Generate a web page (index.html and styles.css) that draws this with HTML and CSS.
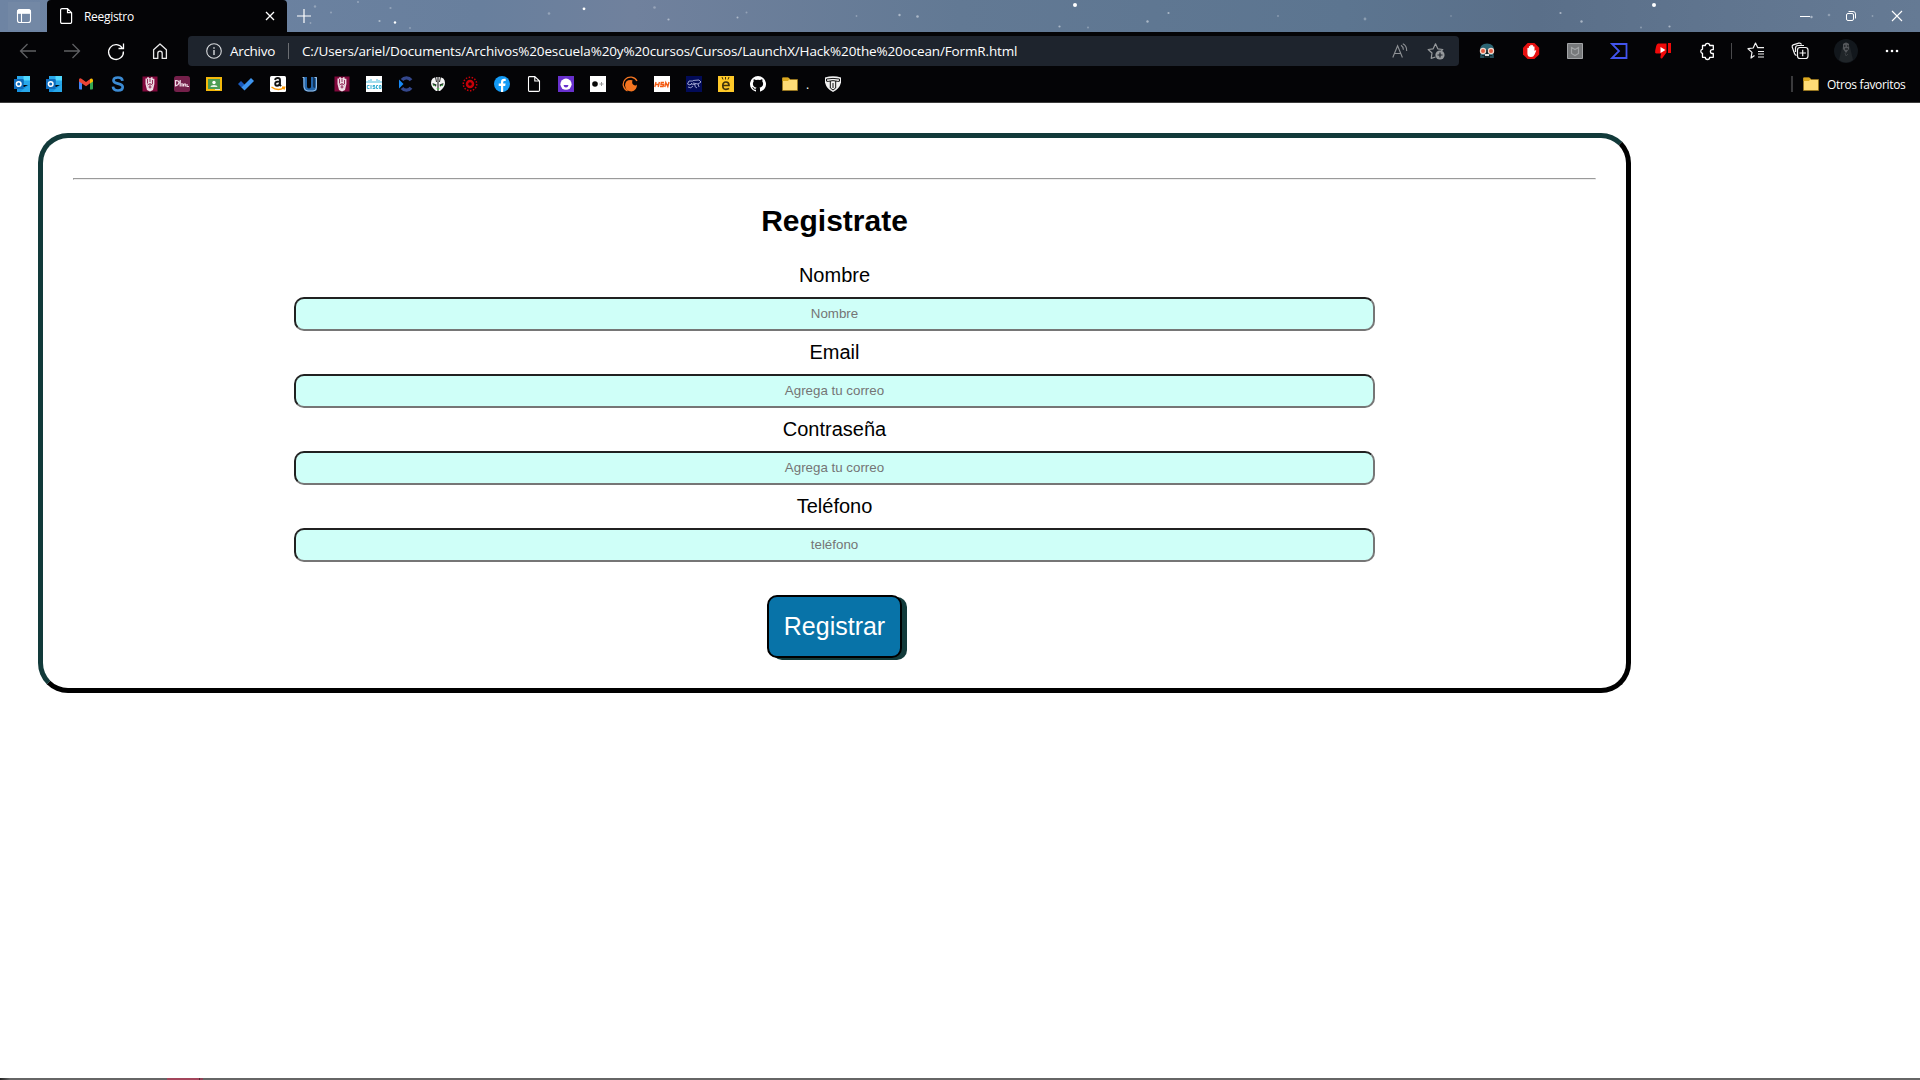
FILE: index.html
```html
<!DOCTYPE html>
<html lang="es">
<head>
<meta charset="utf-8">
<title>Reegistro</title>
<link rel="stylesheet" href="styles.css">
</head>
<body>
<div class="window">
<header class="chrome">
  <div class="tabstrip">
    <svg class="stars" width="1920" height="32" viewBox="0 0 1920 32" fill="#d3dae3">
      <g opacity=".4"><circle cx="315" cy="6.500" r="1.200"/><circle cx="331" cy="12.500" r="1"/><circle cx="358" cy="2" r="1.100"/><circle cx="390.500" cy="8" r="1.100"/><circle cx="410" cy="28" r=".9"/><circle cx="310.500" cy="23" r=".9"/><circle cx="549" cy="13.500" r="1.300"/><circle cx="654.500" cy="7.500" r="1.300"/><circle cx="746.500" cy="12.500" r="1"/><circle cx="856.500" cy="16" r=".9"/><circle cx="1088" cy="27.500" r="1"/><circle cx="1278" cy="16" r=".9"/><circle cx="1365" cy="19" r="1.400"/><circle cx="1451" cy="16" r=".8"/><circle cx="1641" cy="27.500" r="1"/><circle cx="1829" cy="15" r="1.300"/><circle cx="1872.500" cy="16" r=".9"/></g>
      <g opacity=".65"><circle cx="379.500" cy="21" r="1.100"/><circle cx="668.500" cy="19.500" r="1.100"/><circle cx="737.500" cy="17.500" r="1"/><circle cx="899.500" cy="15" r="1.200"/><circle cx="917.500" cy="16.500" r="1.300"/><circle cx="1059.500" cy="26.500" r="1.100"/><circle cx="1147.500" cy="21.500" r="1.200"/><circle cx="1168.500" cy="13" r="1.100"/><circle cx="1560.500" cy="13" r="1.100"/><circle cx="1581.500" cy="21.500" r="1.200"/><circle cx="1669.500" cy="26.500" r="1.100"/><circle cx="1811.500" cy="17" r="1.200"/></g>
      <g fill="#fff"><circle cx="395" cy="22.500" r="1.200"/><circle cx="584" cy="8.800" r="1.400"/><circle cx="1075" cy="5" r="2"/><circle cx="1654" cy="5" r="2"/></g>
    </svg>
    <div class="tab-menu"><svg width="16" height="16" viewBox="0 0 16 16" fill="none" stroke="#fff" stroke-width="1.100"><rect x="1.500" y="1.800" width="13" height="12.700" rx="2.300"/><path d="M1.500 3.500a2 2 0 0 1 2-2h9a2 2 0 0 1 2 2v1.800h-13z" fill="#fff"/><path d="M5.500 5v9.500"/></svg></div>
    <div class="tab">
      <svg width="14" height="18" viewBox="0 0 14 18" fill="none" stroke="#fff" stroke-width="1.200"><path d="M3 1.600h5.500L12.600 5.700V15a1.400 1.400 0 0 1-1.400 1.400H3A1.400 1.400 0 0 1 1.600 15V3A1.400 1.400 0 0 1 3 1.600zM8.500 1.600v4.100h4.100"/></svg>
      <span class="tab-title">Reegistro</span>
      <svg class="tab-close" width="10" height="10" viewBox="0 0 10 10" stroke="#fff" stroke-width="1.300"><path d="M1 1l8 8M9 1l-8 8"/></svg>
    </div>
    <svg class="new-tab" width="16" height="16" viewBox="0 0 16 16" stroke="#fff" stroke-width="1.200"><path d="M8 1v14M1 8h14"/></svg>
    <div class="win-controls">
      <svg width="46" height="32" viewBox="0 0 46 32" fill="none" stroke="#fff"><path d="M18 16.500h10"/></svg>
      <svg width="46" height="32" viewBox="0 0 46 32" fill="none" stroke="#fff"><rect x="18.500" y="13.500" width="7" height="7" rx="1.500"/><path d="M20.500 11.500h4.500a2.500 2.500 0 0 1 2.500 2.500v4.500"/></svg>
      <svg width="46" height="32" viewBox="0 0 46 32" fill="none" stroke="#fff" stroke-width="1.100"><path d="M18 11l10 10M28 11l-10 10"/></svg>
    </div>
  </div>

  <div class="toolbar">
    <div class="nav">
      <svg class="cell" viewBox="0 0 44 38" fill="none" stroke="#5f6063" stroke-width="1.300"><path d="M36 19H20.500M27.500 12l-7 7 7 7"/></svg>
      <svg class="cell" viewBox="0 0 44 38" fill="none" stroke="#5f6063" stroke-width="1.300"><path d="M20 19h15.500M28.500 12l7 7-7 7"/></svg>
      <svg class="cell" viewBox="0 0 44 38" fill="none" stroke="#fff" stroke-width="1.300"><path d="M34.500 16.500a7.400 7.400 0 1 0 .9 3M35.500 11.500v5h-5"/></svg>
      <svg class="cell" viewBox="0 0 44 38" fill="none" stroke="#e9e9e9" stroke-width="1.300"><path d="M21.600 17.700L28 12l6.400 5.700v8.700h-4.200v-5a2.200 2.200 0 0 0-4.400 0v5h-4.200z" stroke-linejoin="round"/></svg>
    </div>
    <div class="address">
      <svg width="16" height="16" viewBox="0 0 16 16" fill="none" stroke="#d8dadd" stroke-width="1.100"><circle cx="8" cy="8" r="7.300"/><path d="M8 7v5M8 4.200v1.500" stroke-width="1.400"/></svg>
      <span class="scheme">Archivo</span>
      <span class="rule"></span>
      <span class="url">C:/Users/ariel/Documents/Archivos%20escuela%20y%20cursos/Cursos/LaunchX/Hack%20the%20ocean/FormR.html</span>
      <svg class="reader" width="16" height="16" viewBox="0 0 16 16" fill="none" stroke="#8e9195" stroke-width="1.100"><path d="M.8 14.500L5.600 2.800l4.800 11.700M2.400 10.500h6.400M9 2.200c1.500.9 2.400 2.600 2.400 4.600M10.800.8c2.600 1.200 4 3.800 3.900 7.200"/></svg>
      <svg width="18" height="18" viewBox="0 0 18 18" fill="none" stroke="#96999c" stroke-width="1.200"><path d="M8.500 15L4.200 16.400 5 11 1.200 7.500l5-.7L8.500 1.800l2.300 5 5 .7-1.700 1.700" stroke-linejoin="round"/><circle cx="13" cy="13" r="4.600" fill="#96999c" stroke="none"/><path d="M10.500 13h5M13 10.500v5" stroke="#1f242c"/></svg>
    </div>
    <div class="tools">
      <svg class="cell" viewBox="0 0 44 38"><path d="M15 18q0-6.500 7-6.500t7 6.500z" fill="#2c6573"/><path d="M15.500 18h13v8h-13z" fill="#15262b"/><path d="M16 26v-3.500h12V26M18 24v2M26 24v2" stroke="#377789" fill="none"/><path d="M20 22h4v2h-4z" fill="#ddd"/><circle cx="18" cy="19" r="3.200" fill="#f1d8ca"/><circle cx="26" cy="19" r="3.200" fill="#f1d8ca"/><circle cx="18" cy="19" r="2" fill="#df5b40"/><circle cx="26" cy="19" r="2" fill="#df5b40"/></svg>
      <svg class="cell" viewBox="0 0 44 38"><path d="M18.600 11h6.800l4.800 4.700v6.700L25.400 27h-6.800L14 22.400v-6.700z" fill="#e6100f"/><path d="M18.400 16v5.500q0 3.500 3.600 3.500 2.500 0 3.600-2.500l1.700-4q-1-.7-1.800.6V14.700q-.7-.8-1.400 0v-1.200q-.7-.8-1.400 0v-.4q-.7-.8-1.400 0v1.200q-.7-.8-1.400 0V16q-.7-.7-1.500 0z" fill="#fff"/></svg>
      <svg class="cell" viewBox="0 0 44 38"><path d="M14.500 11.500h15v15h-15z" fill="#77797b" stroke="#a2a4a6"/><path d="M18.500 15.500l3.500 2 3.500-2v6l-3.500 2-3.500-2z" fill="none" stroke="#a3a5a7" stroke-width="1.200"/></svg>
      <svg class="cell" viewBox="0 0 44 38"><path d="M15 12h14.500v14H15l7-7z" fill="none" stroke="#4254ed" stroke-width="1.800"/></svg>
      <svg class="cell" viewBox="0 0 44 38" fill="#f00909"><path d="M17 11.500h8.500v9L21 26.500q-2 .5-1.500-2l.6-3H15.500q-2-.5-1.300-3l1-4.500q.4-2 1.800-2.500zM27 11h3v10h-3z"/><path d="M19.500 15l5 3-5 3z" fill="#fff"/></svg>
      <svg class="cell" viewBox="0 0 44 38" fill="none" stroke="#fff" stroke-width="1.300"><path d="M17.500 13.500h2.800a2.200 2.200 0 0 1 4.400 0h3.600v4.200h-1a1.900 1.900 0 0 0 0 3.800h1v3.800h-3.600a2.200 2.200 0 0 1-4.400 0h-2.800v-3.800a2.200 2.200 0 0 1 0-4.300z" stroke-linejoin="round"/></svg>
      <span class="tool-rule"></span>
      <svg class="cell" viewBox="0 0 44 38" fill="none" stroke="#f2f2f2" stroke-width="1.200"><path d="M20.500 23.500L17 26l1-5.600-4-3.700 5.200-.7L21.500 11l2.300 4.700h6.200M24 19.500h6M24 22h6M24 25h6" stroke-linejoin="round"/></svg>
      <svg class="cell" viewBox="0 0 44 38" fill="none" stroke="#f2f2f2" stroke-width="1.200"><rect x="19.500" y="15.500" width="10.500" height="11" rx="2.500"/><path d="M24.700 17.800v6.400M21.500 21h6.400M18.500 23.500q-1.500-.6-2-2L14.200 15q-.3-1.500 1-2.100l5.600-1.800q2-.4 2.700 1.300M17.500 20v-4q.1-2.500 2.500-2.500h6"/></svg>
      <svg class="avatar" width="24" height="24" viewBox="0 0 24 24"><circle cx="12" cy="12" r="12" fill="#12171c"/><path d="M5 21l3-12q4-8 8-1l3 13q-7 5-14 0z" fill="#202529"/><path d="M9 5q3-3 6 0v5l-3 4-3-4z" fill="#53565a"/><path d="M10 7h1.500M13 7h1.500M11 10h3" stroke="#090b0e"/><path d="M11 14l1 3 2-2" stroke="#393d41" fill="none"/></svg>
      <svg class="cell more" viewBox="0 0 44 38" fill="#fff"><circle cx="17" cy="19" r="1.300"/><circle cx="22" cy="19" r="1.300"/><circle cx="27" cy="19" r="1.300"/></svg>
    </div>
  </div>

  <div class="bookmarks">
    <svg class="fav" viewBox="0 0 16 16"><path d="M3 0h13v9H3z" fill="#28a8ea"/><path d="M9.500 0H16v4.500H9.500z" fill="#50d9ff"/><path d="M3 4h6.500v5H3z" fill="#0364b8"/><path d="M3 8l7 3 6-3v8H3z" fill="#1490df"/><path d="M16 8v8H6z" fill="#28a8ea"/><path d="M0 3h9.500v10H0z" fill="#0f6cbd"/><circle cx="4.700" cy="8" r="2.300" fill="none" stroke="#fff" stroke-width="1.500"/></svg>
    <svg class="fav" viewBox="0 0 16 16"><path d="M3 0h13v9H3z" fill="#28a8ea"/><path d="M9.500 0H16v4.500H9.500z" fill="#50d9ff"/><path d="M3 4h6.500v5H3z" fill="#0364b8"/><path d="M3 8l7 3 6-3v8H3z" fill="#1490df"/><path d="M16 8v8H6z" fill="#28a8ea"/><path d="M0 3h9.500v10H0z" fill="#0f6cbd"/><circle cx="4.700" cy="8" r="2.300" fill="none" stroke="#fff" stroke-width="1.500"/></svg>
    <svg class="fav" viewBox="0 0 16 16"><path d="M1 4l3 2v7.500H2q-1 0-1-1z" fill="#4285f4"/><path d="M15 4l-3 2v7.500h2q1 0 1-1z" fill="#34a853"/><path d="M1 3.500q.6-1.800 2.500-.8L8 6l4.500-3.300V7L8 10.300 1 5.500z" fill="#ea4335"/><path d="M12 3q2-1.300 3 .8v1.700L12 7.600z" fill="#fbbc04"/></svg>
    <svg class="fav" viewBox="0 0 16 16"><path d="M12.500 4.800C12.200 2.300 10.500 1.500 8 1.500c-2.800 0-4.500 1-4.500 2.900C3.500 8.800 12.700 6.300 12.700 11c0 2.400-2 3.500-4.700 3.500-2.900 0-4.800-1.200-5-3.900" fill="none" stroke="#3c8bd3" stroke-width="2.700"/></svg>
    <svg class="fav" viewBox="0 0 16 16"><path d="M.5 .5h15v15H.5z" fill="#81083c"/><path d="M3.500 2.500h1.700V1.300h1.700v1h2v-1h1.700v1.500h1.800V8L11 14l-3 1.500L5 14 3.500 8z" fill="#efdce5"/><path d="M5.500 3v4.500M8 3v3M10.500 4v4M5.500 9l2.500-1.500L10.500 9M6.500 11h3M8 8v4.500" stroke="#81083c" stroke-width=".8" fill="none"/></svg>
    <svg class="fav" viewBox="0 0 16 16"><rect width="16" height="16" rx="2.500" fill="#74204a"/><path d="M1.500 4v6.500M1.500 4.700q3.500-.4 3.500 1.800T1.500 10M6.200 4v6.500M8 7v3.500M9.500 8v2.500M9.500 8h1.800v2.500M13 8v2.500h2" fill="none" stroke="#f1dce6" stroke-width="1.200"/></svg>
    <svg class="fav" viewBox="0 0 16 16"><path d="M0 1h16v14H0z" fill="#f4b90b"/><path d="M2 3h12v10H2z" fill="#4c9d54"/><circle cx="8" cy="6.500" r="1.700" fill="#fff"/><path d="M4.500 11q.2-2 3.500-2t3.500 2z" fill="#e6f1e5"/><path d="M9 13h5v1H9z" fill="#e8eadb"/></svg>
    <svg class="fav" viewBox="0 0 16 16"><path d="M0 8l3-3 4 4-3 3z" fill="#185abd"/><path d="M3.500 11.500L13 2l3 3L6.500 14.500z" fill="#3e95ef"/></svg>
    <svg class="fav" viewBox="0 0 16 16"><rect width="16" height="16" rx="1.500" fill="#fff"/><path d="M5 4q.5-2 2.800-2Q10 2 10 4v5l1 1.200M10 5.500q-4.800-.3-4.800 2.300 0 2 1.800 2 2.500 0 3-2.800" fill="none" stroke="#111" stroke-width="1.900"/><path d="M1.500 11q6 4.500 12.500.8M12 11.300h2.700l-.7 2.300" fill="none" stroke="#ff9900" stroke-width="1.400"/></svg>
    <svg class="fav" viewBox="0 0 16 16"><path d="M1 1h4v9.500q0 2 2 2t2-2V1h2.500v9q0 2 1 2V1H15v11q0 3.500-3.500 3.500H5Q2 15 1.500 12z" fill="#2467ad"/><path d="M.5 1.500h1.500v9.500q.5 4 4 4h5q3.500 0 3.500-4V1.500h-2" fill="none" stroke="#bad5ef" stroke-width=".8"/></svg>
    <svg class="fav" viewBox="0 0 16 16"><path d="M.5 .5h15v15H.5z" fill="#81083c"/><path d="M3.500 2.500h1.700V1.300h1.700v1h2v-1h1.700v1.500h1.800V8L11 14l-3 1.500L5 14 3.500 8z" fill="#efdce5"/><path d="M5.500 3v4.500M8 3v3M10.500 4v4M5.500 9l2.500-1.500L10.500 9M6.500 11h3M8 8v4.500" stroke="#81083c" stroke-width=".8" fill="none"/></svg>
    <svg class="fav" viewBox="0 0 16 16"><path fill="#fff" d="M0 0h16v16H0z"/><path d="M1 5v2M3 4v3M5 3v4M7 5v2M9 5v2M11 3v4M13 4v3M15 5v2" stroke="#49b9db"/><path d="M3.500 9.500H1.300v3h2.200M5 9v4M9 9.500H7v1.300h2v1.700H6.700M12 9.500h-1.500v3H12M13.300 9.500H15v3h-1.700z" fill="none" stroke="#35aed3"/></svg>
    <svg class="fav" viewBox="0 0 16 16"><path d="M13 4.200A5.600 5.600 0 0 0 4 4M4 12a5.600 5.600 0 0 0 9-.2" fill="none" stroke="#34478c" stroke-width="3.400"/><path d="M1 3.500L5.500 8 1 12.500z" fill="#1688f5"/></svg>
    <svg class="fav" viewBox="0 0 16 16"><path d="M7.500 1Q1 1 1 7q0 4 5 8h1.500zM8.500 1Q15 1 15 7q0 4-5 8H8.500z" fill="#f5f5f5"/><path d="M2.500 7l4 1.500-.5 2-3-1zM13.500 7l-4 1.500.5 2 3-1z" fill="#24352a"/><path d="M3 9l2 .7M13 9l-2 .7M7 12l1 2 1-2" stroke="#52bd55" fill="none"/><path d="M5.500 1l1 5M10.500 1l-1 5" stroke="#222"/></svg>
    <svg class="fav" viewBox="0 0 16 16" fill="none" stroke="#c70008"><circle cx="8" cy="8" r="6.700" stroke-width="1.500" stroke-dasharray="1.500 1.500"/><circle cx="8" cy="8" r="3" stroke-width="2.500"/><path d="M7 8h2" stroke="#2a0000"/></svg>
    <svg class="fav" viewBox="0 0 16 16"><circle cx="8" cy="8" r="8" fill="#139bf6"/><path d="M7 16v-6H4.700V7.600H7V6q0-3.300 3.200-3.300l1.500.1V5h-1.200q-1.300 0-1.300 1.300v1.300h2.400L11.200 10h-2v6z" fill="#fff"/></svg>
    <svg class="fav" viewBox="0 0 16 16" fill="none" stroke="#fff" stroke-width="1.100"><path d="M3.300.6h5.500L13.500 5v9.200q0 1.200-1.200 1.200h-9Q2.500 15.400 2.500 14.200V1.800Q2.500.6 3.300.6zM8.800.6V5h4.700"/></svg>
    <svg class="fav" viewBox="0 0 16 16"><path fill="#6830cd" d="M0 0h16v16H0z"/><circle cx="8" cy="8.200" r="5.600" fill="#fff"/><path d="M5.500 9h5q-.5 2.500-2.500 2.500T5.500 9z" fill="#6830cd"/></svg>
    <svg class="fav" viewBox="0 0 16 16"><path fill="#fff" d="M0 0h16v16H0z"/><circle cx="5" cy="8" r="2.800" fill="#080808"/><path d="M9.500 8h4M11.500 6v4" stroke="#9a9a9a"/></svg>
    <svg class="fav" viewBox="0 0 16 16"><path d="M15 5A7.300 7.300 0 1 0 5.500 15" fill="none" stroke="#f47521" stroke-width="1.300"/><path d="M15 8.500q-.8 1.300-2.700.8-3-1.200-1.800-5Q3.500 3 3 9.300 3.500 15.500 9.500 15.500 15 14.500 15 8.500z" fill="#f47521"/></svg>
    <svg class="fav" viewBox="0 0 16 16"><path fill="#fff" d="M0 0h16v16H0z"/><path d="M.8 11L2 6M4.200 11l1.200-5M1.500 8.500h3.400M10 6.500H7.300L7 8.500h2.500l-.4 2H6M10.800 11l1-4.500 2 4L15 6" fill="none" stroke="#f45c14" stroke-width="1.400"/></svg>
    <svg class="fav" viewBox="0 0 16 16"><path fill="#020b58" d="M0 0h16v16H0z"/><path d="M7 5H3L1.500 8 4 9l2-2M2 11q3 2 5-1M7 4.500l6-.5 2 2-3 2-5-1M9 8q-1 3 2 4M12 8l1 3M5 8l4 .5" fill="none" stroke="#aab0d9" stroke-width=".9"/></svg>
    <svg class="fav" viewBox="0 0 16 16"><path fill="#ffc928" d="M0 0h16v16H0z"/><path d="M4.800 9.500h6.200Q11 6 8 6q-3.200 0-3.200 3.700T8 13.300q2 0 3-.9" fill="none" stroke="#40320b" stroke-width="1.700"/><path d="M4 1l1 2.500M7.500 1v2.500M11 1l-1 2.500" stroke="#40320b"/></svg>
    <svg class="fav" viewBox="0 0 16 16"><path fill="#fff" d="M8 0a8 8 0 0 0-2.500 15.600c.4.100.5-.2.500-.4v-1.500c-2.200.5-2.700-.9-2.700-.9-.4-.9-.9-1.200-.9-1.200-.7-.5.100-.5.100-.5.800.1 1.200.8 1.200.8.700 1.200 1.900.9 2.300.7.100-.5.300-.9.500-1.100-1.800-.2-3.600-.9-3.600-4 0-.9.300-1.600.8-2.100-.1-.2-.4-1 .1-2.100 0 0 .7-.2 2.200.8a7.500 7.500 0 0 1 4 0c1.500-1 2.200-.8 2.200-.8.400 1.100.2 1.900.1 2.100.5.500.8 1.200.8 2.100 0 3.100-1.900 3.800-3.600 4 .3.200.5.700.5 1.500v2.200c0 .2.100.5.500.4A8 8 0 0 0 8 0z"/></svg>
    <div class="folder-mark"><svg class="fav" viewBox="0 0 16 16"><path d="M.5 2h6l1.500 1.500h7.500v11H.5z" fill="#ffdc76" stroke="#9c7619" stroke-width=".8"/><path d="M.5 1.500h5.700L7.500 3 6 5H.5z" fill="#dca91f"/></svg><span class="mark-name">.</span></div>
    <svg class="fav" viewBox="0 0 16 16"><path d="M0 1.500Q8-.8 16 1.500v5Q14.500 13 8 16 1.500 13 0 6.500z" fill="#f1f1f1"/><path d="M1.500 3q6.500-1.200 13 0v2.200q-1.500.5-3.800-.2v7L8 14l-2.700-2V5q-2.300.7-3.800.2zM5.300 5q2.700-.7 5.400 0M8 7v5" fill="none" stroke="#111" stroke-width="1"/></svg>
    <div class="other-marks"><svg class="fav" viewBox="0 0 16 16"><path d="M.5 2h6l1.500 1.500h7.500v11H.5z" fill="#ffdc76" stroke="#9c7619" stroke-width=".8"/><path d="M.5 1.500h5.700L7.500 3 6 5H.5z" fill="#dca91f"/></svg><span class="other-label">Otros favoritos</span></div>
  </div>
</header>

<main class="page">
  <form class="signup">
    <hr class="divider">
    <h1 class="title">Registrate</h1>
    <label class="label" for="name">Nombre</label>
    <input class="field" id="name" type="text" placeholder="Nombre">
    <label class="label" for="mail">Email</label>
    <input class="field" id="mail" type="email" placeholder="Agrega tu correo">
    <label class="label" for="pass">Contraseña</label>
    <input class="field" id="pass" type="password" placeholder="Agrega tu correo">
    <label class="label" for="phone">Teléfono</label>
    <input class="field" id="phone" type="text" placeholder="teléfono">
    <button class="submit" type="button">Registrar</button>
  </form>
</main>
<footer class="taskbar-edge"><span class="active-app"></span></footer>
</div>
</body>
</html>
```
FILE: styles.css
```css
* { box-sizing: border-box; }
body { margin: 0; background: #fff; overflow: hidden; }
svg { display: block; flex: none; }

.window { display: flex; flex-direction: column; height: 1080px; }

/* Browser frame */
.chrome {
  height: 103px;
  flex: none;
  background: #040406;
  border-bottom: 1px solid #3c3c3c;
  color: #fff;
  font-family: "Open Sans", "Noto Sans", sans-serif;
  font-size: 12px;
}
.tabstrip {
  position: relative;
  display: flex;
  align-items: center;
  height: 32px;
  padding-left: 8px;
  background: linear-gradient(90deg, #6e84a3 0, #687f9d 25%, #70819d 33%, #627994 50%, #5c7590 70%, #5a6f89 80%, #60758f 90%, #657a94 100%);
}
.stars { position: absolute; left: 0; top: 0; }
.tab-menu {
  position: relative;
  display: flex;
  align-items: center;
  justify-content: center;
  width: 32px;
  height: 28px;
  background: #7388a5;
}
.tab {
  position: relative;
  display: flex;
  align-items: center;
  width: 240px;
  height: 32px;
  margin-left: 7px;
  padding: 0 12px;
  background: #040406;
  border-radius: 4px 4px 0 0;
}
.tab-title { margin-left: 11px; letter-spacing: -0.3px; }
.tab-close { margin-left: auto; }
.new-tab { position: relative; margin-left: 9px; }
.win-controls { position: relative; display: flex; margin-left: auto; }

.toolbar { display: flex; align-items: center; height: 38px; }
.cell { width: 44px; height: 38px; }
.nav { display: flex; width: 188px; }
.address {
  display: flex;
  align-items: center;
  width: 1271px;
  height: 30px;
  padding: 0 14px 0 18px;
  background: #1e242d;
  border-radius: 4px;
  font-size: 13.5px;
}
.scheme { width: 47px; margin-left: 8px; letter-spacing: -0.3px; }
.rule { width: 1px; height: 16px; margin: 0 13px 0 11px; background: #6b6e73; }
.url { white-space: nowrap; letter-spacing: -0.14px; }
.reader { margin-left: auto; margin-right: 19px; }
.tools { display: flex; align-items: center; padding-left: 6px; }
.tool-rule { width: 1px; height: 16px; margin: 0 2px; background: #4a4a4c; }
.avatar { margin: 0 12px; }

.bookmarks { display: flex; align-items: center; gap: 16px; height: 28px; padding: 0 14px; }
.fav { width: 16px; height: 16px; }
.folder-mark { display: flex; align-items: center; width: 27px; gap: 8px; }
.mark-name { width: 3px; }
.other-marks {
  display: flex;
  align-items: center;
  gap: 8px;
  height: 16px;
  margin-left: auto;
  padding-left: 10px;
  border-left: 2px solid #3a3a3c;
}
.other-label { width: 79px; white-space: nowrap; letter-spacing: -0.35px; }

/* Registration form */
.page {
  flex: 1;
  padding: 30px 0 0 38px;
  font-family: Arial, "Liberation Sans", sans-serif;
}
.signup {
  display: flex;
  flex-direction: column;
  align-items: center;
  width: 1593px;
  height: 560px;
  padding: 40px 30px 0;
  border: 5px solid;
  border-color: #123a3a #000 #000 #123a3a;
  border-radius: 30px;
}
.divider { width: 100%; height: 2px; margin: 0; border: 1px solid; border-color: #9a9a9a #eee #eee #9a9a9a; }
.title { margin: 23px 0 26px; font-size: 30px; line-height: 35px; }
.label { height: 23px; margin-bottom: 10px; font-size: 20px; line-height: 23px; }
.field {
  width: 1081px;
  height: 34px;
  margin-bottom: 10px;
  padding: 0 2px 2px;
  background: #cffff8;
  border: 2px solid;
  border-color: #212121 #767676 #767676 #212121;
  border-radius: 10px;
  font: 13.333px Arial, "Liberation Sans", sans-serif;
  text-align: center;
}
.field::placeholder { color: #757575; }
.submit {
  width: 135px;
  height: 63px;
  margin-top: 23px;
  padding: 0;
  background: #0873a8;
  border: 2px solid #000;
  border-radius: 10px;
  box-shadow: 5px 2px 0 #123a3a;
  color: #fff;
  font: 25px Arial, "Liberation Sans", sans-serif;
}

/* Sliver of the taskbar below the window */
.taskbar-edge { display: flex; height: 2px; padding-left: 167px; background: linear-gradient(90deg, #222 0, #666 10px); }
.active-app { width: 36px; background: linear-gradient(90deg, #a3455b 32px, #5f2836 32px 33px, #8f4256 33px); }
```
